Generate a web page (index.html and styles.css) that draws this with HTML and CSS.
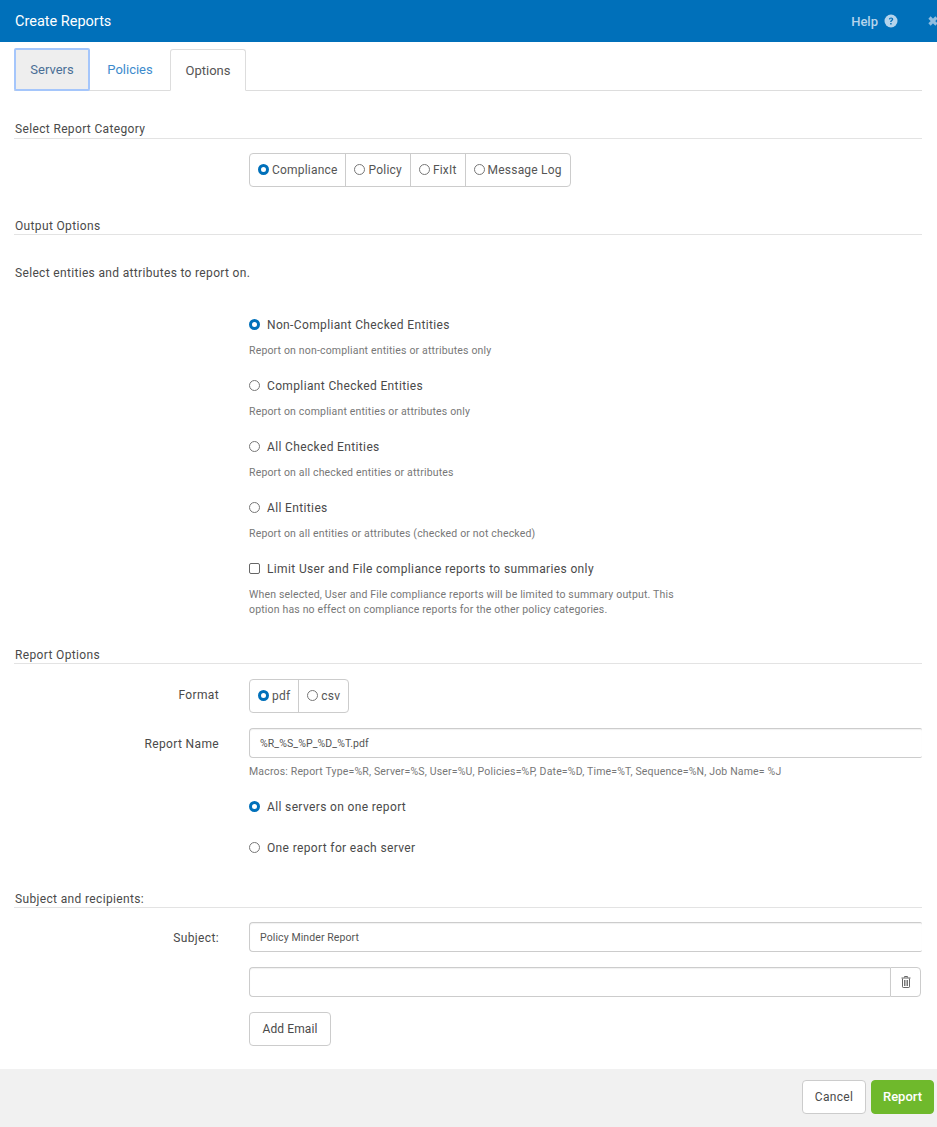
FILE: index.html
```html
<!DOCTYPE html>
<html lang="en">
<head>
<meta charset="utf-8">
<title>Create Reports</title>
<link rel="stylesheet" href="styles.css">
</head>
<body>
<div class="dialog">
  <header class="titlebar">
    <h1 class="title">Create Reports</h1>
    <div class="help">Help
      <svg class="help-icon" viewBox="0 0 14 14" width="14" height="14"><circle cx="7" cy="7" r="6.5" fill="#b5d4ec"/><path d="M4.9 5.3C5 4.1 5.900 3.400 7.100 3.400c1.200 0 2.100.8 2.100 1.800 0 .8-.4 1.200-1.100 1.700-.5.3-.6.5-.6 1.100H6.200c0-.9.2-1.300.9-1.800.5-.3.7-.6.7-.9 0-.4-.3-.7-.8-.7s-.8.3-.9.8z" fill="#0070ba"/><rect x="6.200" y="9" width="1.400" height="1.500" fill="#0070ba"/></svg>
    </div>
    <svg class="close" viewBox="0 0 10 10" width="10" height="10"><path d="M1.500 1.500 8.500 8.500M8.500 1.500 1.500 8.500" fill="none" stroke="#8fbde0" stroke-width="3.200"/></svg>
  </header>

  <main class="content">
    <nav class="tabs">
      <a class="tab tab-focus">Servers</a>
      <a class="tab tab-link">Policies</a>
      <a class="tab tab-active">Options</a>
    </nav>

    <h2 class="section section-first">Select Report Category</h2>
    <div class="row row-category">
      <div class="btn-group">
        <label class="seg"><span class="radio on"></span>Compliance</label>
        <label class="seg"><span class="radio"></span>Policy</label>
        <label class="seg"><span class="radio"></span>FixIt</label>
        <label class="seg"><span class="radio"></span>Message Log</label>
      </div>
    </div>

    <h2 class="section section-output">Output Options</h2>
    <p class="intro">Select entities and attributes to report on.</p>

    <div class="options">
      <div class="option"><span class="radio on"></span>Non-Compliant Checked Entities</div>
      <p class="hint">Report on non-compliant entities or attributes only</p>
      <div class="option"><span class="radio"></span>Compliant Checked Entities</div>
      <p class="hint">Report on compliant entities or attributes only</p>
      <div class="option"><span class="radio"></span>All Checked Entities</div>
      <p class="hint">Report on all checked entities or attributes</p>
      <div class="option"><span class="radio"></span>All Entities</div>
      <p class="hint">Report on all entities or attributes (checked or not checked)</p>
      <div class="option"><span class="check"></span>Limit User and File compliance reports to summaries only</div>
      <p class="hint hint-wide">When selected, User and File compliance reports will be limited to summary output. This option has no effect on compliance reports for the other policy categories.</p>
    </div>

    <h2 class="section section-report">Report Options</h2>
    <div class="row row-format">
      <div class="label">Format</div>
      <div class="btn-group">
        <label class="seg"><span class="radio on"></span>pdf</label>
        <label class="seg"><span class="radio"></span>csv</label>
      </div>
    </div>
    <div class="row row-name">
      <div class="label">Report Name</div>
      <div class="field">
        <div class="input input-full">%R_%S_%P_%D_%T.pdf</div>
        <p class="hint macros">Macros: Report Type=%R, Server=%S, User=%U, Policies=%P, Date=%D, Time=%T, Sequence=%N, Job Name= %J</p>
      </div>
    </div>
    <div class="options options-servers">
      <div class="option"><span class="radio on"></span>All servers on one report</div>
      <div class="option option-second"><span class="radio"></span>One report for each server</div>
    </div>

    <h2 class="section section-subject">Subject and recipients:</h2>
    <div class="row row-subject">
      <div class="label">Subject:</div>
      <div class="field"><div class="input input-full">Policy Minder Report</div></div>
    </div>
    <div class="row row-email">
      <div class="label"></div>
      <div class="field email-field">
        <div class="input input-email"></div>
        <div class="trash">
          <svg viewBox="0 0 10 12" width="10" height="12"><path d="M3.500 1.500V.5h3v1M.5 2h9M1.500 2.500v8.300c0 .4.3.7.7.7h5.600c.4 0 .7-.3.7-.7V2.500" fill="none" stroke="#666" stroke-width="1"/><path d="M3.500 4v6M5 4v6M6.500 4v6" stroke="#666" stroke-width=".9"/></svg>
        </div>
      </div>
    </div>
    <div class="row row-add">
      <div class="label"></div>
      <button class="btn btn-add" type="button">Add Email</button>
    </div>
  </main>

  <footer class="footer">
    <button class="btn btn-cancel" type="button">Cancel</button>
    <button class="btn btn-report" type="button">Report</button>
  </footer>
</div>
</body>
</html>
```
FILE: styles.css
```css
* { box-sizing: border-box; }
html, body { margin: 0; padding: 0; }
body {
  font-family: Roboto, "Liberation Sans", sans-serif;
  font-size: 12px;
  color: #4a4a4a;
  background: #fff;
  overflow: hidden;
  letter-spacing: 0.36px;
}
.dialog { width: 937px; height: 1127px; display: flex; flex-direction: column; overflow: hidden; }

.titlebar {
  height: 42px;
  background: #0070ba;
  display: flex;
  align-items: center;
  padding-left: 15px;
  color: #fff;
  flex: none;
}
.title { margin: 0; flex: 1; font-size: 14.5px; font-weight: 400; letter-spacing: 0; }
.help { display: flex; align-items: center; gap: 6px; color: #b5d4ec; font-size: 13px; font-weight: 500; letter-spacing: 0; }
.close { margin-left: 30px; margin-right: -1px; flex: none; }

.content { flex: 1; padding: 7px 15px 0 14px; }

.tabs { display: flex; height: 42px; border-bottom: 1px solid #ddd; }
.tab { height: 42px; line-height: 42px; text-align: center; font-size: 13px; letter-spacing: 0; }
.tab-focus {
  width: 76px;
  height: 43px;
  margin-top: -1px;
  background: #eee;
  border: 2px solid #a5c6fb;
  border-radius: 2px;
  color: #4a6f96;
  line-height: 40px;
}
.tab-link { width: 80px; color: #3d8bcd; }
.tab-active {
  width: 76px;
  background: #fff;
  border: 1px solid #ddd;
  border-bottom-color: #fff;
  border-radius: 3px 3px 0 0;
  color: #555;
  line-height: 41px;
}

.section {
  margin: 0;
  padding-left: 1px;
  font-size: 12px;
  font-weight: 400;
  color: #4a4a4a;
  height: 17px;
  line-height: 19px;
  border-bottom: 1px solid #e3e3e3;
  letter-spacing: 0.35px;
  box-sizing: content-box;
}
.section-first { margin-top: 30px; line-height: 17px; }
.section-output { margin-top: 30px; }
.section-report { margin-top: 29px; }
.section-subject { margin-top: 34px; }

.row { display: flex; align-items: flex-start; }
.label { width: 205px; margin-right: 30px; text-align: right; flex: none; }

.row-category { margin-top: 14px; padding-left: 235px; }
.btn-group {
  display: inline-flex;
  height: 34px;
  border: 1px solid #ccc;
  border-radius: 4px;
}
.seg {
  display: flex;
  align-items: center;
  padding: 0 8px;
  letter-spacing: 0.2px;
  color: #555;
  border-left: 1px solid #ccc;
}
.seg:first-child { border-left: 0; }
.row-category .seg:first-child { padding-right: 7px; }

.radio {
  display: inline-block;
  width: 11px;
  height: 11px;
  border: 1px solid #777;
  border-radius: 50%;
  background: #fff;
  margin-right: 3px;
  margin-top: -1px;
  flex: none;
}
.row-category .seg:nth-child(2) .radio { margin-right: 4px; }
.radio.on { border: 3px solid #0070ba; }
.check {
  display: inline-block;
  width: 11px;
  height: 11px;
  border: 1px solid #666;
  border-radius: 2px;
  background: #fff;
  flex: none;
}

.intro { margin: 31px 0 0; padding-left: 1px; line-height: 15px; letter-spacing: 0.33px; }

.options { padding-left: 235px; margin-top: 36px; }
.option {
  display: flex;
  align-items: center;
  line-height: 16px;
}
.option .radio, .option .check { margin-right: 7px; margin-top: -2px; }
.hint {
  margin: 11px 0 20px;
  font-size: 10.5px;
  line-height: 14px;
  color: #777;
  letter-spacing: 0.17px;
}
.hint-wide { width: 440px; margin: 10px 0 0; line-height: 15px; }

.row-format { margin-top: 15px; }
.row-format .label { line-height: 32px; }
.row-name { margin-top: 15px; }
.row-name .label { height: 30px; line-height: 32px; }
.field { flex: 1; min-width: 0; }
.input {
  height: 30px;
  border: 1px solid #ccc;
  border-radius: 4px;
  padding: 0 10px;
  line-height: 29px;
  font-size: 10.5px;
  color: #555;
  letter-spacing: 0.1px;
  box-shadow: inset 0 1px 1px rgba(0,0,0,.06);
}
.input-full { border-right: 0; border-radius: 4px 2px 2px 4px; }
.macros { margin: 7px 0 0; white-space: nowrap; }

.options-servers { margin-top: 20px; }
.option-second { margin-top: 25px; }

.row-subject { margin-top: 14px; }
.row-subject .label { height: 30px; line-height: 32px; }
.row-email { margin-top: 15px; }
.email-field { display: flex; padding-right: 1px; }
.input-email { flex: 1; border-radius: 4px 0 0 4px; border-right: 0; }
.trash {
  width: 31px;
  height: 30px;
  border: 1px solid #ccc;
  border-radius: 0 4px 4px 0;
  display: flex;
  align-items: center;
  justify-content: center;
}
.row-add { margin-top: 15px; }
.btn {
  height: 34px;
  padding: 0;
  font-family: inherit;
  font-size: 12px;
  letter-spacing: 0.1px;
  color: #4a4a4a;
  background: #fff;
  border: 1px solid #ccc;
  border-radius: 4px;
}
.btn-add { width: 82px; }

.footer {
  flex: none;
  height: 58px;
  background: #f1f1f1;
  display: flex;
  justify-content: flex-end;
  align-items: flex-start;
  gap: 5px;
  padding: 11px 3px 0 0;
}
.btn-cancel { width: 64px; letter-spacing: 0.3px; }
.btn-report {
  width: 63px;
  padding: 0 0 1px;
  background: #6fb92c;
  border-color: #6fb92c;
  color: #fff;
  font-size: 13px;
  font-weight: 500;
  letter-spacing: 0;
}
```
